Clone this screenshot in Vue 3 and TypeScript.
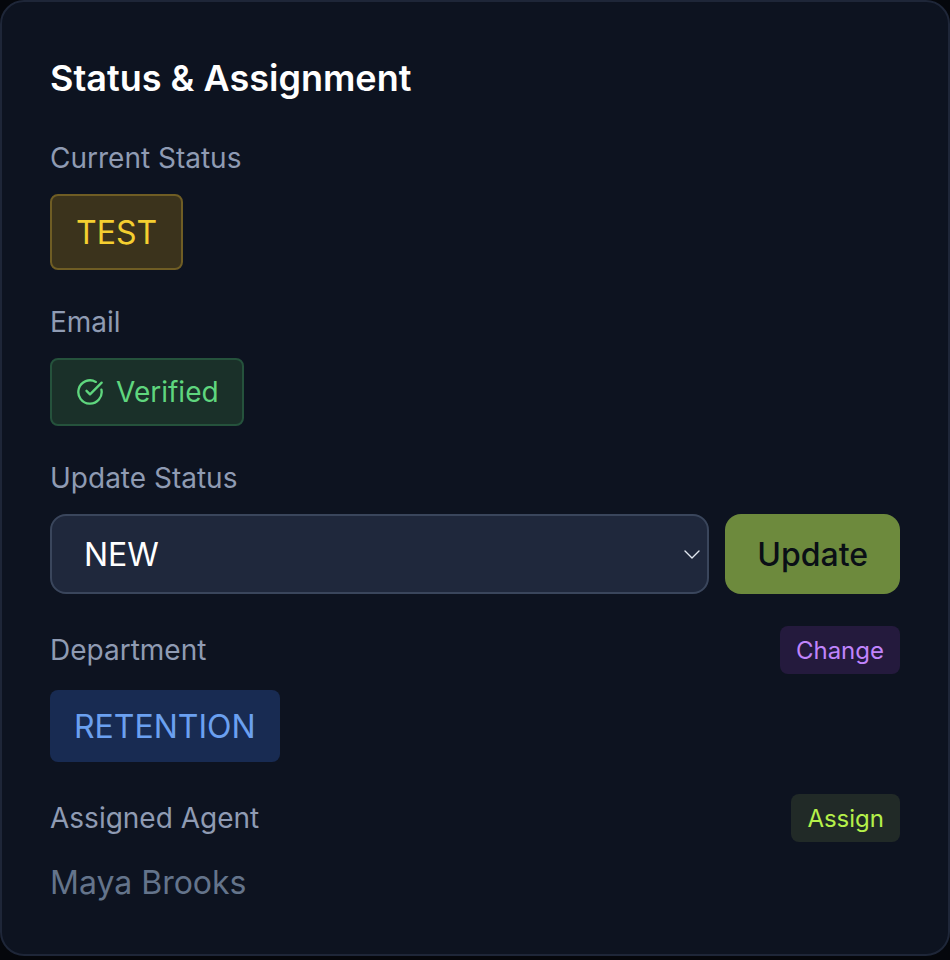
<script setup lang="ts">
import { ref } from 'vue'

const statuses: string[] = ['NEW', 'TEST', 'CONTACTED', 'CLOSED']
const selected = ref<string>('NEW')
</script>

<template>
  <section class="card">
    <h2 class="title">Status &amp; Assignment</h2>

    <div class="field">
      <div class="label">Current Status</div>
      <div class="row-start"><span class="badge badge-status">TEST</span></div>
    </div>

    <div class="field">
      <div class="label">Email</div>
      <div class="row-start">
        <span class="badge badge-email">
          <svg class="check" viewBox="0 0 24 24" fill="none" stroke="currentColor" stroke-width="2" stroke-linecap="round" stroke-linejoin="round" aria-hidden="true">
            <path d="M21.801 10A10 10 0 1 1 17 3.335" />
            <path d="m9 11 3 3L22 4" />
          </svg>
          Verified
        </span>
      </div>
    </div>

    <div class="field">
      <div class="label">Update Status</div>
      <div class="update-row">
        <div class="select-wrap">
          <select v-model="selected" class="select">
            <option v-for="s in statuses" :key="s" :value="s">{{ s }}</option>
          </select>
          <svg class="chevron" viewBox="0 0 16 9" fill="none" stroke="currentColor" stroke-width="1.4" stroke-linecap="round" stroke-linejoin="round" aria-hidden="true">
            <path d="M1 1l7 7 7-7" />
          </svg>
        </div>
        <button class="update" type="button">Update</button>
      </div>
    </div>

    <div class="field">
      <div class="label-row">
        <div class="label">Department</div>
        <button class="mini mini-purple" type="button">Change</button>
      </div>
      <div class="row-start"><span class="dept">RETENTION</span></div>
    </div>

    <div class="field">
      <div class="label-row">
        <div class="label">Assigned Agent</div>
        <button class="mini mini-lime" type="button">Assign</button>
      </div>
      <div class="agent">Maya Brooks</div>
    </div>
  </section>
</template>

<style>
html,
body {
  margin: 0;
  background: #05070c;
}
</style>

<style scoped>
.card {
  box-sizing: border-box;
  width: 950px;
  height: 956px;
  padding: 48px;
  background: #0d1320;
  border: 2px solid #1e2638;
  border-radius: 24px;
  font-family: Inter, "Liberation Sans", sans-serif;
  display: flex;
  flex-direction: column;
  gap: 32px;
}

.title {
  margin: 0;
  font-size: 36px;
  line-height: 56px;
  font-weight: 600;
  color: #ffffff;
}

.field {
  display: flex;
  flex-direction: column;
  gap: 16px;
}

.label {
  font-size: 28px;
  line-height: 40px;
  color: #8f9bb3;
}

.row-start {
  display: flex;
  align-items: flex-start;
}

.badge {
  box-sizing: border-box;
  display: inline-flex;
  align-items: center;
  border-radius: 8px;
  border-width: 2px;
  border-style: solid;
}

.badge-status {
  padding: 13px 24px 11px;
  font-size: 32px;
  line-height: 48px;
  color: #f5cf30;
  background: #3b331c;
  border-color: #6f5d24;
}

.badge-email {
  gap: 12px;
  padding: 12px 23.5px 12px 24px;
  font-size: 28px;
  line-height: 40px;
  color: #5fd67e;
  background: #1a3029;
  border-color: #25523c;
}

.check {
  width: 28px;
  height: 28px;
  flex: none;
}

.update-row {
  display: flex;
  gap: 16px;
}

.select-wrap {
  flex: 1;
  position: relative;
  display: flex;
  color: #e2e8f0;
}

.select {
  flex: 1;
  box-sizing: border-box;
  height: 80px;
  padding: 0 32px;
  appearance: none;
  background: #1f283c;
  border: 2px solid #3a465c;
  border-radius: 16px;
  color: #ffffff;
  font-family: inherit;
  font-size: 32px;
}

.chevron {
  position: absolute;
  right: 9px;
  top: 36px;
  width: 16px;
  height: 9px;
  pointer-events: none;
}

.update {
  box-sizing: border-box;
  height: 80px;
  padding: 0 32px;
  border: 0;
  border-radius: 16px;
  background: #6d8a3d;
  color: #0a0f16;
  font-family: inherit;
  font-size: 32px;
  font-weight: 500;
}

.label-row {
  display: flex;
  align-items: center;
  justify-content: space-between;
}

.mini {
  box-sizing: border-box;
  height: 48px;
  padding: 0 16px;
  border: 0;
  border-radius: 8px;
  font-family: inherit;
  font-size: 24px;
}

.mini-purple {
  background: #241a3d;
  color: #c084fc;
}

.mini-lime {
  background: #212a27;
  color: #b5f04a;
}

.dept {
  box-sizing: border-box;
  display: inline-block;
  padding: 13px 24px 11px;
  border-radius: 8px;
  font-size: 32px;
  line-height: 48px;
  color: #6ba0f0;
  background: #182b52;
}

.agent {
  padding-top: 1px;
  font-size: 32px;
  line-height: 47px;
  color: #64748b;
}
</style>
